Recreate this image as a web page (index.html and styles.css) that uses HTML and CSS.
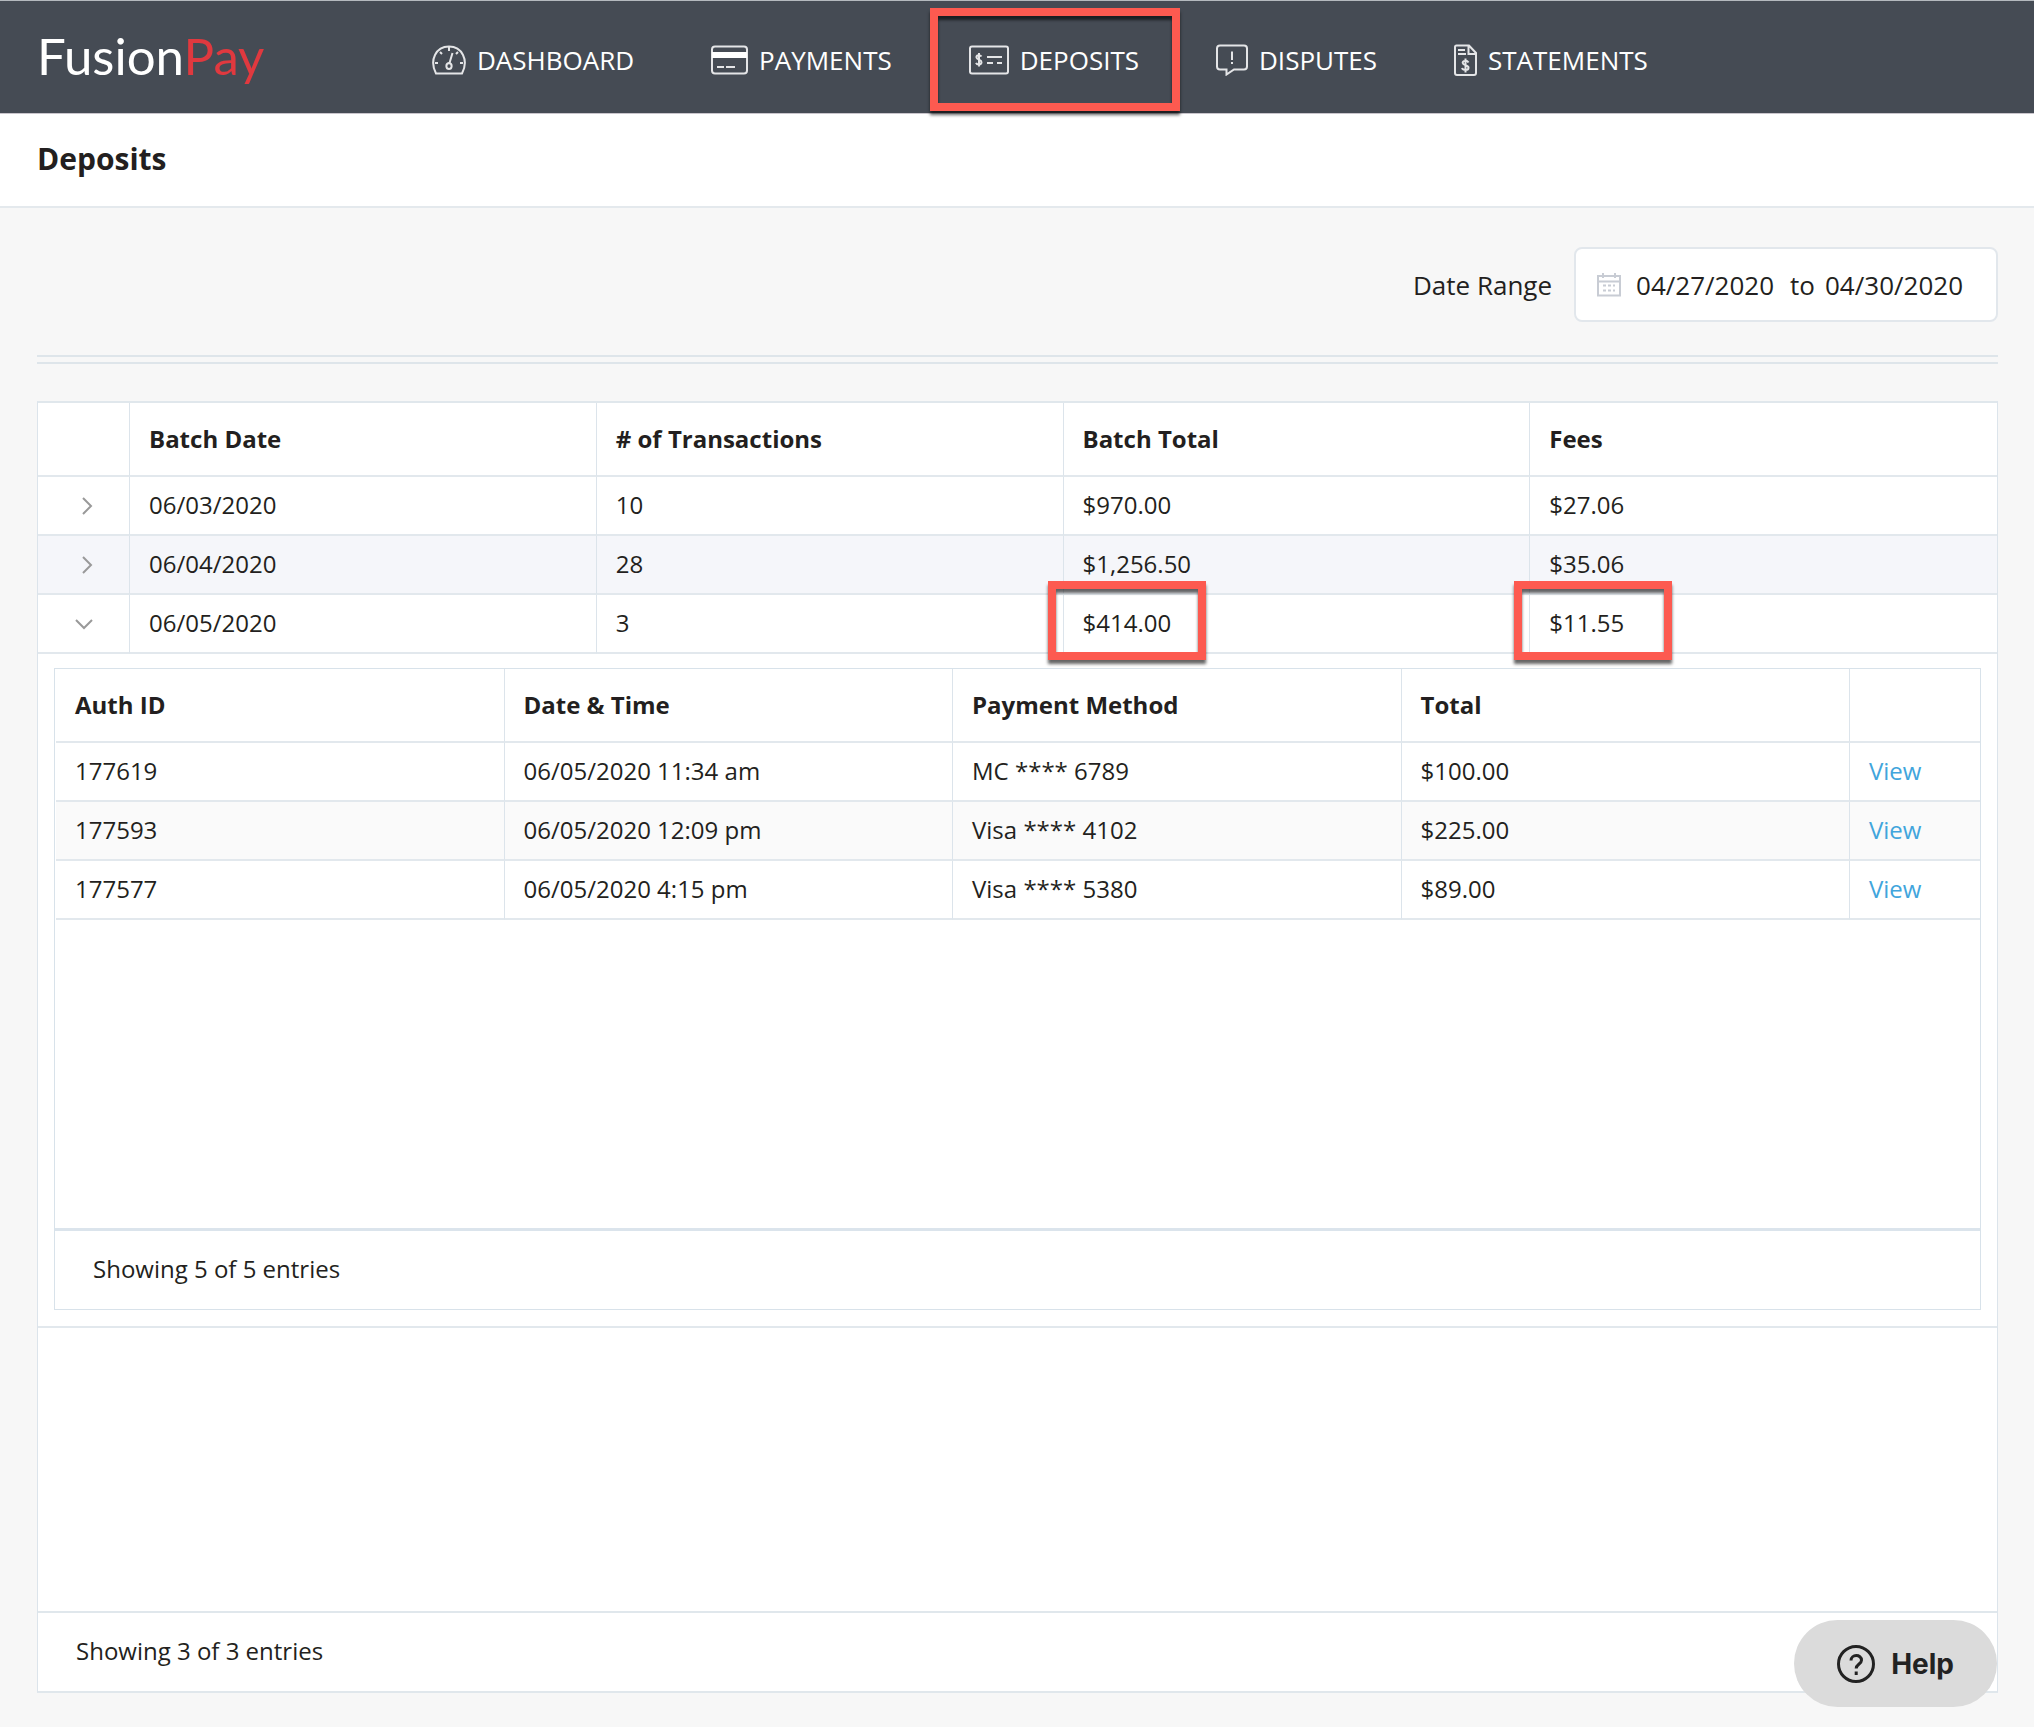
FILE: index.html
```html
<!DOCTYPE html>
<html lang="en">
  <head>
    <meta charset="UTF-8" />
    <meta name="viewport" content="width=device-width, initial-scale=1.0" />
    <title>FusionPay - Deposits</title>
    <link rel="stylesheet" href="styles.css">
  </head>
  <body>
    <header class="header">
      <a class="logo" href="#">Fusion<span>Pay</span></a>
      <nav class="nav">
        <a href="#">
          <svg width="34" height="30" viewBox="0 0 34 30">
            <path d="M4 28.500C-3 15 4 1.500 17 1.500S37 15 30 28.500Z" />
            <path d="M17 2v4M8 7l2 2M26 7l-2 2M3 18h3M28 18h3M20.500 8l-3 10" />
            <path d="M17 18c-4 1-3 6 0 6s4-5 0-6Z" />
          </svg>
          DASHBOARD
        </a>
        <a href="#">
          <svg width="37" height="30" viewBox="0 0 37 30">
            <rect x="1" y="1.500" width="35" height="27" rx="3" />
            <path class="solid" d="M1 7h35v6H1z" />
            <path d="M6 22h7M15 22h9" />
          </svg>
          PAYMENTS
        </a>
        <a class="marked" href="#">
          <svg width="40" height="30" viewBox="0 0 40 30">
            <rect x="1" y="1.500" width="38" height="27" rx="2" />
            <path d="M18 12h15M18 18h6M28 18h5" />
            <path d="M12.500 11.500C11 9.500 7 10 7.500 12.500C8 15 12.500 14.500 12.500 17.200C12.500 20 8 20 7 17.800M10 8v13.500" />
          </svg>
          DEPOSITS
        </a>
        <a href="#">
          <svg width="32" height="32" viewBox="0 0 32 32">
            <path d="M4 1.500h24q3 0 3 3v18q0 3-3 3H18L10.500 30.500V25.500H4q-3 0-3-3v-18q0-3 3-3Z" />
            <path d="M16 7.500v8.500M16 18v2" />
          </svg>
          DISPUTES
        </a>
        <a href="#">
          <svg width="23" height="32" viewBox="0 0 23 32">
            <path d="M2.500 1.500H15L22 9v20q0 2-2 2H3q-2 0-2-2V3q0-1.500 1.500-1.500ZM14.500 1.500V10H22" />
            <path d="M4 6h7M4 10h8" />
            <path d="M14.500 18.500C13 16 8.500 16.500 8.700 19C9 21.700 14.500 20.800 14.500 23.700C14.500 26.800 9 26.500 8 24M11.500 14.500v14" />
          </svg>
          STATEMENTS
        </a>
      </nav>
    </header>

    <div class="title-bar">
      <h1>Deposits</h1>
    </div>

    <main class="cont">
      <form class="filter">
        <label for="from">Date Range</label>
        <div class="date-range">
          <svg width="24" height="24" viewBox="0 0 24 24">
            <path d="M1 3h22v19.500H1zM1 8.500h22M6 0v5M18 0v5" />
            <path class="dots" d="M6 12.500h12M6 17.500h12" />
          </svg>
          <input type="text" name="from" id="from" value="04/27/2020" />
          <label for="till">to</label>
          <input type="text" name="till" id="till" value="04/30/2020" />
        </div>
      </form>
      <hr />

      <section class="panel">
        <div class="panel-body">
          <table class="batches">
            <thead>
              <tr>
                <th class="toggle"></th>
                <th>Batch Date</th>
                <th># of Transactions</th>
                <th>Batch Total</th>
                <th>Fees</th>
              </tr>
            </thead>
            <tbody>
              <tr>
                <td class="toggle">
                  <button type="button" aria-label="Expand 06/03/2020">
                    <svg width="24" height="24" viewBox="0 0 24 24"><path d="M11 5l8 8-8 8" /></svg>
                  </button>
                </td>
                <td>06/03/2020</td>
                <td>10</td>
                <td>$970.00</td>
                <td>$27.06</td>
              </tr>
              <tr class="striped">
                <td class="toggle">
                  <button type="button" aria-label="Expand 06/04/2020">
                    <svg width="24" height="24" viewBox="0 0 24 24"><path d="M11 5l8 8-8 8" /></svg>
                  </button>
                </td>
                <td>06/04/2020</td>
                <td>28</td>
                <td>$1,256.50</td>
                <td>$35.06</td>
              </tr>
              <tr>
                <td class="toggle">
                  <button type="button" aria-label="Collapse 06/05/2020">
                    <svg width="24" height="24" viewBox="0 0 24 24"><path d="M4 9l8 8 8-8" /></svg>
                  </button>
                </td>
                <td>06/05/2020</td>
                <td>3</td>
                <td class="marked">$414.00</td>
                <td class="marked">$11.55</td>
              </tr>
              <tr>
                <td class="details" colspan="5">
                  <div class="panel inner">
                    <div class="panel-body">
                      <table class="payments">
                        <thead>
                          <tr>
                            <th>Auth ID</th>
                            <th>Date &amp; Time</th>
                            <th>Payment Method</th>
                            <th>Total</th>
                            <th class="action"></th>
                          </tr>
                        </thead>
                        <tbody>
                          <tr>
                            <td>177619</td>
                            <td>06/05/2020 11:34 am</td>
                            <td>MC **** 6789</td>
                            <td>$100.00</td>
                            <td><a href="#">View</a></td>
                          </tr>
                          <tr class="striped">
                            <td>177593</td>
                            <td>06/05/2020 12:09 pm</td>
                            <td>Visa **** 4102</td>
                            <td>$225.00</td>
                            <td><a href="#">View</a></td>
                          </tr>
                          <tr>
                            <td>177577</td>
                            <td>06/05/2020 4:15 pm</td>
                            <td>Visa **** 5380</td>
                            <td>$89.00</td>
                            <td><a href="#">View</a></td>
                          </tr>
                        </tbody>
                      </table>
                    </div>
                    <p class="panel-foot">Showing 5 of 5 entries</p>
                  </div>
                </td>
              </tr>
            </tbody>
          </table>
        </div>
        <p class="panel-foot">Showing 3 of 3 entries</p>
      </section>
    </main>

    <button class="help" type="button">
      <svg width="38" height="38" viewBox="0 0 38 38">
        <circle cx="19" cy="19" r="17.500" />
        <path d="M14 15.500C14 9 24.500 9 24.500 15.300C24.500 19 19.200 19 19.200 23.500" />
        <path d="M19.200 26.500v3.500" />
      </svg>
      Help
    </button>
  </body>
</html>
```
FILE: styles.css
```css
*,
*::after {
  padding: 0;
  margin: 0;
  box-sizing: border-box;
}
body {
  background: #f7f7f7;
  color: #231f20;
  font-family: "Open Sans", "Noto Sans", sans-serif;
  font-size: 24px;
  line-height: 34px;
}
svg {
  display: block;
  flex: none;
  fill: none;
  stroke: currentColor;
  stroke-width: 2;
}
input,
button {
  border: none;
  background: none;
  color: inherit;
  font: inherit;
}

.header {
  display: flex;
  align-items: center;
  height: 114px;
  padding: 0 36px 0 37px;
  background: #454b54;
  border-top: 1px solid #b4b9be;
  border-bottom: 1px solid #c9c5cc;
  color: #fff;
}
.header a {
  color: inherit;
  text-decoration: none;
}
.logo {
  flex: 0 0 395px;
  padding-bottom: 2px;
  font-family: Lato, sans-serif;
  font-size: 51px;
  line-height: 60px;
}
.logo span {
  color: #e0393f;
}
.nav {
  display: flex;
  gap: 77px;
  padding-top: 5px;
  font-size: 26px;
}
.nav a {
  display: flex;
  align-items: center;
  gap: 11px;
}
.nav svg {
  stroke: #e4e5e7;
}
.nav .solid {
  fill: #fff;
  stroke: none;
}

/* red call-out frames */
.marked {
  position: relative;
}
.marked::after {
  content: "";
  position: absolute;
  top: -14px;
  left: -16px;
  width: 158px;
  height: 79px;
  border: 8px solid #fd5a50;
  box-shadow: 0 4px 3px rgba(0, 0, 0, 0.6), inset 0 4px 3px rgba(0, 0, 0, 0.6);
  pointer-events: none;
}
.nav .marked::after {
  top: -35px;
  left: -39px;
  width: calc(100% + 80px);
  height: 103px;
}

.title-bar {
  height: 94px;
  padding: 27px 37px;
  background: #fff;
  border-bottom: 2px solid #e4e9ed;
}
.title-bar h1 {
  font-size: 30px;
  line-height: 36px;
}

.cont {
  padding: 39px 36px 33px 37px;
}
.filter {
  display: flex;
  justify-content: flex-end;
  align-items: center;
  gap: 22px;
  font-size: 26px;
}
.date-range {
  display: flex;
  align-items: center;
  height: 75px;
  padding: 0 27px 0 21px;
  background: #fff;
  border: 2px solid #e2e7ec;
  border-radius: 8px;
}
.date-range svg {
  margin-right: 15px;
  color: #c8ccd4;
}
.date-range .dots {
  stroke-dasharray: 3 2;
}
.date-range input {
  width: 144px;
  outline-color: #41a5dc;
}
.date-range label {
  margin: 0 10px;
}
hr {
  height: 9px;
  margin: 33px 0 37px;
  border: solid #dee5ea;
  border-width: 2px 0;
}

.panel {
  background: #fff;
  border: 1px solid #dce4eb;
  border-top: 2px solid #e0e7ec;
  border-bottom: 2px solid #e0e7ec;
}
.panel-body {
  min-height: 1208px;
}
.panel-foot {
  padding: 21px 38px 23px;
  border-top: 2px solid #e0e7ec;
}
.inner {
  border: 1px solid #d8e2ea;
}
.inner .panel-body {
  min-height: 559px;
  padding-left: 1px;
}
.inner .panel-foot {
  border-top: 3px solid #dbe4ec;
}

table {
  width: 100%;
  table-layout: fixed;
  border-collapse: separate;
  border-spacing: 0;
}
th,
td {
  height: 59px;
  padding: 0 19px 2px;
  border-right: 1px solid #dce4eb;
  border-bottom: 2px solid #e2e8ed;
  text-align: left;
}
th {
  height: 74px;
  padding-bottom: 0;
}
th:last-child,
td:last-child {
  border-right: none;
}
.toggle {
  width: 92px;
}
.toggle button {
  display: block;
  margin: 0 auto;
  cursor: pointer;
}
.toggle svg {
  color: #999;
}
.striped {
  background: #f5f6fa;
}
.payments .striped {
  background: #fafafa;
}
.action {
  width: 130px;
}
.details {
  padding: 14px 16px 16px;
}
td a {
  color: #41a5dc;
  text-decoration: none;
}

.help {
  position: fixed;
  right: 37px;
  bottom: 20px;
  display: flex;
  align-items: center;
  gap: 16px;
  height: 87px;
  padding: 0 43px;
  border-radius: 44px;
  background: #dbdbdb;
  color: #222;
  font-family: Inter, sans-serif;
  font-size: 28px;
  font-weight: 700;
  cursor: pointer;
}
.help svg {
  stroke-width: 3;
}
```
